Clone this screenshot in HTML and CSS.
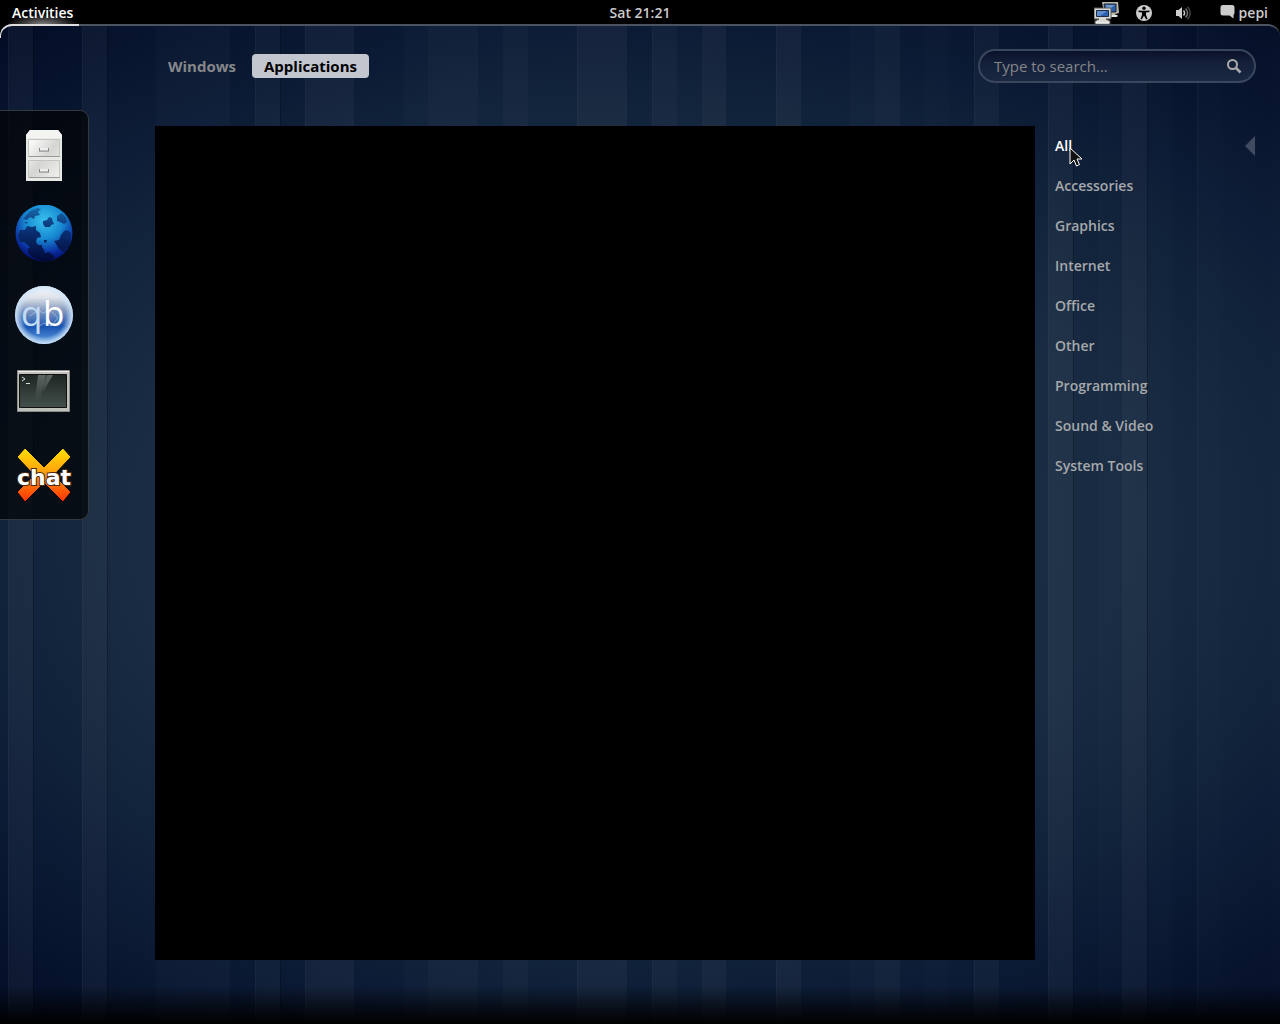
FILE: index.html
```html
<!DOCTYPE html>
<html lang="en">
<head>
<meta charset="utf-8">
<title>Activities</title>
<link rel="stylesheet" href="styles.css">
</head>
<body>
<header class="panel">
  <button class="panel-button activities">Activities</button>
  <time class="clock">Sat 21:21</time>
  <div class="status">
    <button class="panel-button" aria-label="Network">
      <svg width="26" height="24" viewBox="0 0 26 24">
        <path d="M8 1h16l1 11-4 1 3 3H13l-3-4z" fill="#b9b9b2"/>
        <path d="M10 3h12v8H11z" fill="#2c60ac" stroke="#222" stroke-width="1"/>
        <path d="M12 4h9l-8 6z" fill="#6f99d2"/>
        <path d="M14 14h10l-2 2H12z" fill="#e8e8e2"/>
        <path d="M0 7h17v11h-5l4 2v3H1v-3l4-2H0z" fill="#d8d8d0" stroke="#555" stroke-width="1"/>
        <path d="M2.500 9.500h12v6h-12z" fill="#2c60ac" stroke="#1c2c48"/>
        <path d="M3 10h10l-7 5H3z" fill="#5f8ccc"/>
        <path d="M2 22h13" stroke="#fff"/>
      </svg>
    </button>
    <button class="panel-button" aria-label="Universal access">
      <svg width="16" height="16" viewBox="0 0 16 16">
        <circle cx="8" cy="8" r="8" fill="#ccc"/>
        <circle cx="8" cy="3.300" r="1.700" fill="#000"/>
        <path d="M2.500 5.500 7 5.800h2l4.500-.3v1.400L10 7.600v2.300l1.600 4-1.400.6L8.200 11h-.4l-2 3.500-1.400-.6 1.600-4V7.600l-3.500-.7z" fill="#000"/>
      </svg>
    </button>
    <button class="panel-button volume" aria-label="Volume">
      <svg width="16" height="16" viewBox="0 0 16 16" fill="none">
        <path d="M1 5h2.500L7 2v12l-3.500-3H1z" fill="#ccc"/>
        <path d="M8.500 5.500a3.500 3.500 0 0 1 0 5" stroke="#ccc" stroke-width="1.500"/>
        <path d="M10.500 3.500a6 6 0 0 1 0 9" stroke="#777" stroke-width="1.500"/>
        <path d="M12.500 1.800a8.500 8.500 0 0 1 0 12.400" stroke="#444" stroke-width="1.500"/>
      </svg>
    </button>
    <button class="panel-button user">
      <svg width="16" height="16" viewBox="0 0 16 16">
        <path d="M3 0h9a2.500 2.500 0 0 1 2.500 2.500V8A3 3 0 0 1 13.500 10v3.500L9.500 10.500H3A2.500 2.500 0 0 1 .5 8V2.500A2.500 2.500 0 0 1 3 0z" fill="#ccc"/>
      </svg>
      pepi
    </button>
  </div>
</header>

<div class="overview">
  <svg class="stripes" viewBox="0 0 1280 100" preserveAspectRatio="none" shape-rendering="crispEdges" fill="#fff" aria-hidden="true">
    <path fill-opacity=".01" d="M107 0h123v100H107zM478 0h25v100h-25zM528 0h49v100h-49zM677 0h25v100h-25zM924 0h25v100h-25zM1098 0h24v100h-24zM1147 0h25v100h-25zM1222 0h49v100h-49z"/>
    <path fill-opacity=".015" d="M156 0h74v100h-74zM404 0h24v100h-24zM850 0h25v100h-25zM1197 0h25v100h-25zM1271 0h9v100h-9z"/>
    <path fill-opacity=".03" d="M255 0h25v100h-25zM428 0h50v100h-50zM503 0h25v100h-25zM652 0h25v100h-25zM875 0h25v100h-25zM974 0h25v100h-25z"/>
    <path fill-opacity=".04" d="M8 0h25v100H8zM82 0h25v100H82zM305 0h49v100h-49zM577 0h50v100h-50zM702 0h24v100h-24zM776 0h25v100h-25zM1048 0h25v100h-25zM1122 0h25v100h-25z"/>
    <path fill-opacity=".03" d="M8 0h1v100H8zM82 0h1v100h-1zM255 0h1v100h-1zM305 0h1v100h-1zM577 0h1v100h-1zM652 0h1v100h-1zM776 0h1v100h-1zM974 0h1v100h-1zM1048 0h1v100h-1zM1197 0h1v100h-1z"/>
    <path fill="#000" fill-opacity=".25" d="M33 0h1v100h-1zM107 0h1v100h-1zM280 0h1v100h-1zM1073 0h1v100h-1zM1147 0h1v100h-1z"/>
  </svg>

  <div class="switcher">
    <nav class="tabs">
      <button class="tab">Windows</button>
      <button class="tab selected">Applications</button>
    </nav>
    <form class="search">
      <input class="search-input" type="text" placeholder="Type to search..." aria-label="Search">
      <svg width="16" height="16" viewBox="0 0 16 16" fill="none" stroke="#aaa">
        <circle cx="6.500" cy="6.500" r="4.500" stroke-width="2"/>
        <path d="M10 10l4.500 4.500" stroke-width="2.500"/>
      </svg>
    </form>
  </div>

  <main class="workspace">
    <aside class="dash">
      <button class="launcher" aria-label="Files">
        <svg width="60" height="60" viewBox="0 0 60 60">
          <defs>
            <linearGradient id="metal" x2="1" y2="1"><stop stop-color="#fff"/><stop offset=".5" stop-color="#d5d5d2"/><stop offset="1" stop-color="#f0f0ee"/></linearGradient>
          </defs>
          <path d="M16 5h28l4 5v46H12V10z" fill="#e9e9e7"/>
          <path d="M16 5h28l4 5v3H12v-3z" fill="#f4f4f3"/>
          <path d="M14.500 14.500h31v17h-31zM14.500 35.500h31v17h-31z" fill="url(#metal)" stroke="#c4c4c2"/>
          <path d="M15 31.500h31M15 52.500h31" stroke="#999"/>
          <path d="M25.500 23v3h9v-3M25.500 44v3h9v-3" fill="#eee" stroke="#888"/>
          <path d="M25 26.500h10M25 47.500h10" stroke="#aaa"/>
        </svg>
      </button>
      <button class="launcher" aria-label="Web browser">
        <svg width="60" height="60" viewBox="0 0 60 60">
          <defs>
            <radialGradient id="sea" cx=".5" cy=".28" r=".76"><stop stop-color="#38c0ee"/><stop offset=".42" stop-color="#188bd2"/><stop offset=".75" stop-color="#0a2fa0"/><stop offset="1" stop-color="#020660"/></radialGradient>
            <linearGradient id="land" x2="0" y2="1"><stop stop-color="#1768aa"/><stop offset=".4" stop-color="#0a3275"/><stop offset="1" stop-color="#020838"/></linearGradient>
          </defs>
          <circle cx="30" cy="28" r="28.500" fill="url(#sea)"/>
          <path fill="url(#land)" d="M9 14l7-8 7-3 4 1-3 3 2 3-5 1-1 3-4-2-3 3-3-1zM4 30l2-5 5 0 2-4 5 1 4-1 0 4 4 3 1 4-4 1-1 4 2 3 4 0 0 5-6 3-5-1-2-6-5-4-4 0zM29 16l4-1 2-3 3 1 1 4 1 2-3 1-1 2-5 0-2-3zM43 11l5-3 4 5 1 4-3 2-4-2-3-1zM50 26l3-1 4 3-1 12-6 7-5-3-3-5-2-3 5-1 2-5zM30 35l3 0-1 3-2-1zM14 43l7 1 3-3 5 2 2 5 4-1 4 3 2 3-6 3-8 0-8-3-5-5zM11 17l3 0-2 2z"/>
        </svg>
      </button>
      <button class="launcher" aria-label="qBittorrent">
        <svg width="60" height="60" viewBox="0 0 60 60">
          <defs>
            <linearGradient id="orb" x2="0" y2="1"><stop stop-color="#fbfbfd"/><stop offset=".2" stop-color="#dfe3ea"/><stop offset=".4" stop-color="#8b9fc2"/><stop offset=".7" stop-color="#1a55b2"/><stop offset="1" stop-color="#5e9ee0"/></linearGradient>
            <radialGradient id="rim"><stop offset=".74" stop-color="#cfe4f8" stop-opacity="0"/><stop offset="1" stop-color="#cfe4f8"/></radialGradient>
          </defs>
          <circle cx="30" cy="30" r="29" fill="url(#orb)"/>
          <circle cx="30" cy="30" r="29" fill="url(#rim)"/>
          <path d="M16 31l8-6 5 3 7-3 8 8-7 8-7-3-6 4" fill="none" stroke="#b8cbe6" stroke-width="1" opacity=".6"/>
          <text class="qb" y="41"><tspan x="7" fill="#c2dcf5">q</tspan><tspan x="29" fill="#fff">b</tspan></text>
        </svg>
      </button>
      <button class="launcher" aria-label="Terminal">
        <svg width="60" height="60" viewBox="0 0 60 60">
          <defs>
            <linearGradient id="screen" x2="0" y2="1"><stop stop-color="#1e2523"/><stop offset="1" stop-color="#44504b"/></linearGradient>
            <linearGradient id="glare" x2="0" y2="1"><stop stop-color="#7a837e"/><stop offset="1" stop-color="#7a837e" stop-opacity="0"/></linearGradient>
          </defs>
          <path d="M3.500 5.500h52v41h-52z" fill="#bfbfbb" stroke="#8b8b88"/>
          <path d="M4 6.500h51" stroke="#eee"/>
          <path d="M5.500 9.500h47v33h-47z" fill="url(#screen)" stroke="#111"/>
          <path d="M24 10h8l-5 25h-6zM39 10h-6l-7 22z" fill="url(#glare)" opacity=".7"/>
          <path d="M8 12l3 2-3 2M12 18.500h4" stroke="#ddd" fill="none"/>
        </svg>
      </button>
      <button class="launcher" aria-label="XChat">
        <svg width="60" height="60" viewBox="0 0 60 60">
          <defs>
            <linearGradient id="fire" gradientUnits="userSpaceOnUse" x1="0" y1="3" x2="0" y2="57"><stop stop-color="#ffe000"/><stop offset=".45" stop-color="#ffa010"/><stop offset="1" stop-color="#ff3000"/></linearGradient>
          </defs>
          <path d="M11 3l19 19L49 3l8 9-17 18 17 17-8 10-19-19-19 19-8-10 17-17L3 12z" fill="url(#fire)" stroke="#000" stroke-width="1"/>
          <text class="chat" x="30" y="40">chat</text>
        </svg>
      </button>
    </aside>

    <section class="apps" aria-label="Applications"></section>

    <ul class="categories">
      <li class="category current">
        <a href="#all">All</a>
        <svg class="arrow" width="10" height="20" viewBox="0 0 10 20"><path d="M10 0v20L0 10z" fill="#404b60"/></svg>
        <svg class="pointer" width="14" height="20" viewBox="0 0 14 20"><path d="M1 1v16l4-4 2.500 6 3-1.500L8 12h5z" fill="#111" stroke="#fff" stroke-width="1"/></svg>
      </li>
      <li class="category"><a href="#accessories">Accessories</a></li>
      <li class="category"><a href="#graphics">Graphics</a></li>
      <li class="category"><a href="#internet">Internet</a></li>
      <li class="category"><a href="#office">Office</a></li>
      <li class="category"><a href="#other">Other</a></li>
      <li class="category"><a href="#programming">Programming</a></li>
      <li class="category"><a href="#sound-video">Sound &amp; Video</a></li>
      <li class="category"><a href="#system-tools">System Tools</a></li>
    </ul>
  </main>
</div>
</body>
</html>
```
FILE: styles.css
```css
* {
  box-sizing: border-box;
}

body {
  display: flex;
  flex-direction: column;
  min-height: 100vh;
  margin: 0;
  background: #000;
  color: #ccc;
  font: 600 14px/20px "Open Sans", "Noto Sans", sans-serif;
}

button {
  margin: 0;
  padding: 0;
  border: 0;
  background: none;
  color: inherit;
  font: inherit;
}

svg {
  display: block;
}

.panel {
  display: grid;
  grid-template-columns: 1fr auto 1fr;
  align-items: center;
  height: 24px;
}

.panel-button {
  display: flex;
  align-items: center;
  height: 24px;
}

.activities {
  width: 78px;
  padding: 0 0 0 12px;
  background: radial-gradient(ellipse 36px 11px at 43px 100%, #888, transparent);
  color: #fff;
}

.clock {
  padding-top: 1px;
}

.status {
  display: flex;
  justify-content: flex-end;
  align-items: center;
  padding: 1px 12px 0 0;
}

.status .panel-button + .panel-button {
  margin-left: 16px;
}

.status .panel-button + .volume {
  margin-left: 23px;
}

.status .panel-button + .user {
  gap: 3px;
  margin-left: 29px;
}

.overview {
  position: relative;
  display: flex;
  flex: 1;
  flex-direction: column;
  border-top: 2px solid #4b5360;
  border-radius: 12px 12px 0 0;
  background: radial-gradient(ellipse 80% 66% at center, #1b3045, #182b42 48%, #11233b 63%, #0c1b35 75%, #07142e 86%, #020b24);
}

.overview::before {
  position: absolute;
  top: -2px;
  left: 0;
  width: 78px;
  height: 12px;
  border-top: 2px solid #ddd;
  border-left: 1px solid #ddd;
  border-top-left-radius: 12px;
  content: "";
}

.overview::after {
  position: absolute;
  right: 0;
  bottom: 0;
  left: 0;
  height: 38px;
  background: linear-gradient(transparent, #000);
  content: "";
}

.stripes {
  position: absolute;
  inset: 0;
  width: 100%;
  height: 100%;
  border-radius: 12px 12px 0 0;
}

.switcher {
  position: relative;
  display: flex;
  justify-content: space-between;
  align-items: center;
  padding: 23px 24px 27px 156px;
}

.tabs {
  display: flex;
  gap: 4px;
}

.tab {
  height: 24px;
  padding: 0 12px;
  border-radius: 4px;
  color: #85878a;
  font-size: 15px;
  font-weight: 700;
  line-height: 24px;
}

.tab.selected {
  background: #c2c6cf;
  color: #000;
}

.search {
  display: flex;
  align-items: center;
  width: 278px;
  height: 34px;
  padding: 0 12px 0 14px;
  border: 2px solid #3a465b;
  border-radius: 17px;
  background: linear-gradient(#0a1228, #14203a 40%, #1b2842);
}

.search-input {
  flex: 1;
  min-width: 0;
  padding: 0;
  border: 0;
  outline: 0;
  background: none;
  color: #ccc;
  font: 400 15px/24px "Open Sans", "Noto Sans", sans-serif;
}

.search-input::placeholder {
  color: #858688;
  opacity: 1;
}

.workspace {
  position: relative;
  display: grid;
  flex: 1;
  grid-template-columns: 155px 1fr 245px;
  padding-bottom: 64px;
}

.dash {
  display: flex;
  flex-direction: column;
  justify-self: start;
  align-self: start;
  width: 89px;
  padding: 4px 0;
  border: 1px solid #34383f;
  border-left: 0;
  border-radius: 0 9px 9px 0;
  background: rgba(0, 0, 0, 0.65);
}

.launcher {
  display: grid;
  place-items: center;
  height: 80px;
}

.qb {
  font: 400 35px "Open Sans", "Noto Sans", sans-serif;
}

.chat {
  fill: #fff;
  stroke: #4a2a10;
  stroke-width: 2px;
  paint-order: stroke;
  text-anchor: middle;
  font: 700 22px "DejaVu Sans", sans-serif;
}

.apps {
  margin-top: 16px;
  background: #000;
}

.categories {
  margin: 16px 0 0;
  padding: 0 25px 0 20px;
  list-style: none;
}

.category {
  position: relative;
  display: flex;
  justify-content: space-between;
  align-items: center;
  height: 40px;
}

.category a {
  color: #a6a8ab;
  text-decoration: none;
}

.category.current a {
  color: #fff;
}

.pointer {
  position: absolute;
  top: 21px;
  left: 14px;
}
```
